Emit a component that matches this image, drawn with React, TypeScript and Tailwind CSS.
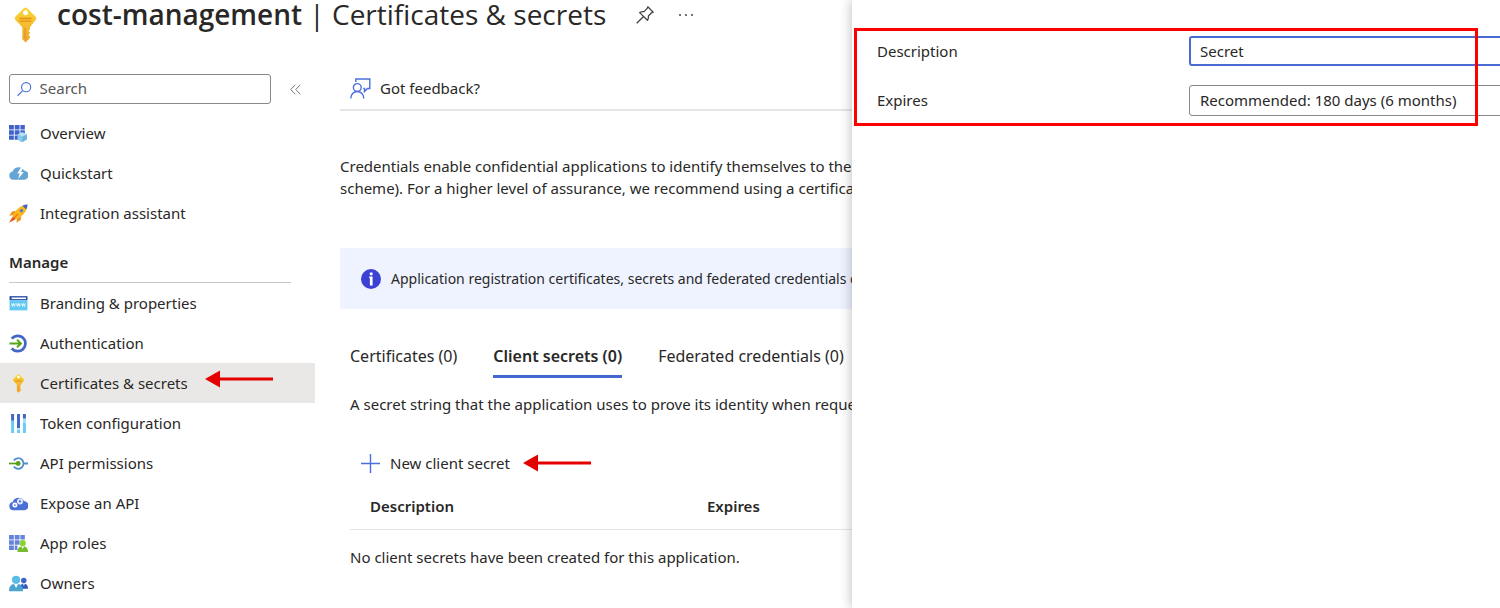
import React from "react"

interface NavItem {
  label: string
  icon: React.ReactNode
  active?: boolean
}

const svgProps = {
  viewBox: "0 0 18 18",
  fill: "none",
  "aria-hidden": true,
  className: "w-[19px] h-[19px] shrink-0",
}

function KeyIcon({ className }: { className: string }) {
  return (
    <svg viewBox="0 0 22 36" fill="none" aria-hidden className={className}>
      <defs>
        <linearGradient id="key-fill" x1="11" y1="0" x2="11" y2="36" gradientUnits="userSpaceOnUse">
          <stop stopColor="#f9d835" />
          <stop offset="1" stopColor="#efa32a" />
        </linearGradient>
      </defs>
      <path
        d="M9.3 1.3 1.3 9.2a3 3 0 0 0 0 4.2l5.9 6c.4.4.6.9.6 1.5v11.2l3.2 3.4 4.4-4.4v-1.6l-1.4-1.4 1.4-1.5v-1.2L14 23.9l1.4-1.5v-1.5c0-.6.2-1.1.6-1.5l4.7-5.900a3 3 0 0 0 0-4.200l-8-8a2.500 2.500 0 0 0-3.400 0Z"
        fill="url(#key-fill)"
      />
      <circle cx="11" cy="5.7" r="2.5" fill="#fff" />
      <path d="M5.5 11.5h11M5.5 14.2h11" stroke="#e58f1c" strokeWidth="1.3" strokeLinecap="round" />
      <path d="M10.5 21v10.5" stroke="#e0952a" strokeWidth="1.2" />
    </svg>
  )
}

function OverviewIcon() {
  return (
    <svg {...svgProps}>
      <path
        d="M0 1h4.600v4.200H0zM5.400 1H10v4.200H5.400zM10.800 1h4.200v4.200h-4.200zM0 6h4.600v4.200H0zM5.400 6H10v4.200H5.400zM10.800 6h4.200v4.200h-4.200zM0 11h4.600v4H0zM5.400 11H10v4H5.400z"
        fill="#3f63c9"
      />
      <path d="m12.600 7.800 4.400 2v5l-4.400 2.400-4.400-2.400v-5z" fill="#6db3df" />
      <path d="m12.600 7.800 4.400 2-4.400 2.200-4.400-2.200z" fill="#b9e0f5" />
      <path d="M12.600 12v5.200L8.200 14.800v-5z" fill="#8cc8ea" />
    </svg>
  )
}

function QuickstartIcon() {
  return (
    <svg {...svgProps}>
      <path
        d="M4 15a4 4 0 0 1-.5-7.900A5.800 5.800 0 0 1 14.200 6.200 4.400 4.400 0 0 1 14 15z"
        fill="#64a5d4"
      />
      <path d="M11.800 2.500 7.800 9h2.400l-1.600 5.200L14 7.600h-2.600l2.200-4.600z" fill="#fff" />
    </svg>
  )
}

function RocketIcon() {
  return (
    <svg {...svgProps}>
      <path d="M6.500 6.500 2.800 7 .3 11.200l4.500-.8zM11.600 11.400l-.5 3.800L7 17.800l.7-4.500z" fill="#ee9420" />
      <path d="M3.800 11.500 0 17.800l6.600-3.500z" fill="#e5541d" />
      <path d="M17.500.5c-4.600.3-8.400 2.700-11 6L3.200 11.500l3.300 3.300 5.100-3.100c3.400-2.600 5.700-6.500 5.900-11.200z" fill="#fbb81c" />
      <path d="M17.500.5c-1.700 0-3.300.5-4.800 1.200l3.700 3.600c.7-1.500 1.100-3.100 1.100-4.800z" fill="#3f63c9" />
      <circle cx="11.8" cy="6.3" r="1.6" fill="#5a78cf" />
      <path d="m4.500 13.500 4-4" stroke="#e8771c" strokeWidth="1.2" />
    </svg>
  )
}

function BrandingIcon() {
  return (
    <svg {...svgProps}>
      <path d="M.5 2h17v4H.5z" fill="#2c4fa5" />
      <path d="M2.500 3.300h13.600v1.500H2.500z" fill="#fff" />
      <path d="M.5 6h17v9.500H.5z" fill="#63c9f3" />
      <path
        d="m2.500 9 .8 2.700L4.200 9l.9 2.700.8-2.700M7.200 9l.8 2.700.9-2.700.9 2.700.8-2.700M12 9l.8 2.700.9-2.700.9 2.700.8-2.700"
        stroke="#fff"
        strokeWidth=".8"
      />
    </svg>
  )
}

function AuthenticationIcon() {
  return (
    <svg {...svgProps}>
      <path d="M2.600 4.400a7.300 7.300 0 1 1 0 9.200" stroke="#4166c8" strokeWidth="2.6" />
      <path d="M.5 9h10.600M7.600 5.400 11.300 9l-3.700 3.600" stroke="#58a618" strokeWidth="1.9" />
    </svg>
  )
}

function TokenIcon() {
  return (
    <svg {...svgProps}>
      <path d="M3.400 0v6.500M9 0v13.500M14.600 0v4.500" stroke="#4166c8" strokeWidth="2.8" />
      <path d="M3.400 6.500V18M9 14.700V18M14.600 8.500V18" stroke="#66cdf2" strokeWidth="2.8" />
      <path d="M14.600 4.500v4" stroke="#a5e1f8" strokeWidth="2.8" />
    </svg>
  )
}

function PermissionsIcon() {
  return (
    <svg {...svgProps}>
      <path d="M4.600 6.200a5 5 0 1 1 0 5.600M14 9h4" stroke="#508fcb" strokeWidth="1.7" />
      <path d="M0 9h8" stroke="#57a01c" strokeWidth="1.6" />
      <circle cx="8.7" cy="9" r="2.3" fill="#57a01c" />
    </svg>
  )
}

function ExposeIcon() {
  return (
    <svg {...svgProps}>
      <path d="M4 15.500a4 4 0 0 1-.5-7.900A5.800 5.800 0 0 1 14.200 6.700a4.400 4.400 0 0 1-.2 8.800z" fill="#4a70d6" />
      <circle cx="10.4" cy="7" r="2" stroke="#dfe8ff" strokeWidth="1.8" />
      <circle cx="5.6" cy="10.5" r="1.6" stroke="#fff" strokeWidth="1.6" />
    </svg>
  )
}

function RolesIcon() {
  return (
    <svg {...svgProps}>
      <path
        d="M0 1h4.600v4.200H0zM5.400 1H10v4.200H5.400zM10.800 1h4.200v4.200h-4.200zM0 6h4.600v4.200H0zM5.400 6H10v4.200H5.400zM0 11h4.600v4.200H0zM5.400 11H8v4.200H5.400z"
        fill="#6684dc"
      />
      <path d="M8 17c0-3.300 1.300-5.500 5-5.500s5 2.200 5 5.500z" fill="#76bc2d" />
      <path d="m11.600 11.600 1.400 2.600 1.400-2.600z" fill="#fff" />
      <circle cx="13" cy="8.7" r="2.9" fill="#86d633" />
    </svg>
  )
}

function OwnersIcon() {
  return (
    <svg {...svgProps}>
      <path d="M10.500 14c0-3 .8-4.800 3.600-4.800S18 11 18 14z" fill="#3559bd" />
      <circle cx="14" cy="6.2" r="2.6" fill="#3f63c9" />
      <path d="m13.200 9.300.9 2 .9-2z" fill="#fff" />
      <path d="M0 16.300c0-4.400 1.900-7 6.700-7s6.600 2.600 6.600 7z" fill="#4ba3d1" />
      <path d="m4.800 9.400 1.900 3.800 1.900-3.800z" fill="#fff" />
      <circle cx="6.7" cy="5.5" r="3.9" fill="#5bbde6" />
    </svg>
  )
}

function ArrowLeft({ className = "" }: { className?: string }) {
  return (
    <svg viewBox="0 0 68 18" aria-hidden className={`w-[68px] h-[18px] shrink-0 ${className}`}>
      <path d="M0 9 15 .5v17z" fill="#e50000" />
      <path d="M14 9h54" stroke="#e50000" strokeWidth="3" />
    </svg>
  )
}

const topItems: NavItem[] = [
  { label: "Overview", icon: <OverviewIcon /> },
  { label: "Quickstart", icon: <QuickstartIcon /> },
  { label: "Integration assistant", icon: <RocketIcon /> },
]

const manageItems: NavItem[] = [
  { label: "Branding & properties", icon: <BrandingIcon /> },
  { label: "Authentication", icon: <AuthenticationIcon /> },
  { label: "Certificates & secrets", icon: <KeyIcon className="w-[19px] h-[19px] shrink-0" />, active: true },
  { label: "Token configuration", icon: <TokenIcon /> },
  { label: "API permissions", icon: <PermissionsIcon /> },
  { label: "Expose an API", icon: <ExposeIcon /> },
  { label: "App roles", icon: <RolesIcon /> },
  { label: "Owners", icon: <OwnersIcon /> },
]

function NavList({ items }: { items: NavItem[] }) {
  return (
    <ul>
      {items.map((item) => (
        <li key={item.label} className="relative">
          <a
            href="#"
            aria-current={item.active ? "page" : undefined}
            className={`flex h-10 items-center gap-3 pl-[9px] ${item.active ? "bg-[#e9e8e6]" : "hover:bg-gray-100"}`}
          >
            {item.icon}
            {item.label}
          </a>
          {item.active && <ArrowLeft className="absolute left-[205px] top-[7px]" />}
        </li>
      ))}
    </ul>
  )
}

function Sidebar() {
  return (
    <nav className="w-[315px] shrink-0">
      <div className="flex items-center pl-[9px] pb-[9px]">
        <label className="flex h-[30px] w-[262px] items-center gap-2 rounded-[3px] border border-[#8a8886] pl-[7px]">
          <svg viewBox="0 0 16 16" fill="none" stroke="#4a6fdc" strokeWidth="1.3" aria-hidden className="w-4 h-4">
            <circle cx="10" cy="6" r="5" />
            <path d="M6.300 9.700.6 15.400" />
          </svg>
          <input
            type="text"
            aria-label="Search"
            placeholder="Search"
            className="w-full bg-transparent pb-[2px] outline-none placeholder:text-[#555]"
          />
        </label>
        <button type="button" aria-label="Collapse menu" className="ml-[19px]">
          <svg viewBox="0 0 11 11" fill="none" stroke="#777" aria-hidden className="w-[11px] h-[11px]">
            <path d="M5.300.8.7 5.500l4.600 4.700M10.300.8 5.700 5.500l4.600 4.700" />
          </svg>
        </button>
      </div>
      <NavList items={topItems} />
      <h2 className="ml-[9px] mr-6 flex h-[50px] items-center border-b border-[#c8c8c8] pt-[9px] font-semibold">Manage</h2>
      <NavList items={manageItems} />
    </nav>
  )
}

function CertificatesContent() {
  return (
    <main className="ml-[25px] min-w-0 flex-1 whitespace-nowrap">
      <div className="flex h-[37px] items-start border-b-2 border-[#e6e6e6]">
        <button type="button" className="ml-[10px] flex h-7 items-center gap-[9px]">
          <svg viewBox="0 0 21 21" fill="none" stroke="#4a6fdc" strokeWidth="1.4" aria-hidden className="w-[21px] h-[21px]">
            <path d="M5.800 4V1h14v9.500h-2.300l-3 3v-3h-1.200" />
            <circle cx="7.3" cy="9.5" r="3.9" />
            <path d="M.8 20.500c0-4 2.700-7 6.500-7s6.500 3 6.500 7" />
          </svg>
          Got feedback?
        </button>
      </div>
      <p className="mt-[44px] leading-[22px]">
        Credentials enable confidential applications to identify themselves to the authentication service
        <br />
        scheme). For a higher level of assurance, we recommend using a certificate
      </p>
      <div className="mt-[49px] flex h-[61px] items-center gap-[10px] rounded-[2px] bg-[#eff3ff] pl-[21px] text-sm">
        <svg viewBox="0 0 20 20" aria-hidden className="w-5 h-5 shrink-0">
          <circle cx="10" cy="10" r="10" fill="#3b41d2" />
          <circle cx="10.2" cy="4.8" r="1.6" fill="#fff" />
          <path d="M8.300 7.500h3.300v9H8.900V9.200h-.6z" fill="#fff" />
        </svg>
        Application registration certificates, secrets and federated credentials can be found in the tabs below.
      </div>
      <div className="pl-[10px]">
        <div role="tablist" className="mt-[28px] flex h-[41px] items-stretch gap-9 text-base">
          <button type="button" role="tab" aria-selected="false" className="border-b-3 border-transparent">
            Certificates (0)
          </button>
          <button type="button" role="tab" aria-selected="true" className="border-b-3 border-[#4468d0] font-semibold">
            Client secrets (0)
          </button>
          <button type="button" role="tab" aria-selected="false" className="border-b-3 border-transparent">
            Federated credentials (0)
          </button>
        </div>
        <p className="mt-[15px] leading-[22px]">
          A secret string that the application uses to prove its identity when requesting a token.
        </p>
        <div className="mt-[37px] flex h-[22px] items-center gap-[13px] pl-[10px]">
          <button type="button" className="flex items-center gap-[9px]">
            <svg viewBox="0 0 21 21" stroke="#4a6fdc" strokeWidth="1.4" aria-hidden className="w-[21px] h-[21px]">
              <path d="M10.500 1v19M1 10.500h19" />
            </svg>
            New client secret
          </button>
          <ArrowLeft />
        </div>
        <table className="mt-[10px] w-full table-fixed text-left">
          <thead>
            <tr className="h-[45px] border-b border-[#e6e6e6]">
              <th className="w-[337px] pl-5 font-semibold">Description</th>
              <th className="pl-5 font-semibold">Expires</th>
            </tr>
          </thead>
          <tbody>
            <tr className="h-[56px]">
              <td colSpan={2}>No client secrets have been created for this application.</td>
            </tr>
          </tbody>
        </table>
      </div>
    </main>
  )
}

function AddSecretPanel() {
  return (
    <aside className="relative z-10 w-[648px] shrink-0 bg-white shadow-[0_0_12px_rgba(0,0,0,0.28)]">
      <form className="flex flex-col gap-[19px] overflow-hidden pl-[25px] pt-[36px]">
        <div className="flex items-center">
          <label htmlFor="description" className="w-[312px] shrink-0">
            Description
          </label>
          <input
            id="description"
            type="text"
            defaultValue="Secret"
            className="h-[30px] w-[340px] shrink-0 rounded-[3px] border-2 border-[#4a6ad4] px-[9px] outline-none"
          />
        </div>
        <div className="flex items-center">
          <label htmlFor="expires" className="w-[312px] shrink-0">
            Expires
          </label>
          <select
            id="expires"
            className="h-[31px] w-[340px] shrink-0 appearance-none rounded-[3px] border border-[#8a8886] bg-white px-[10px] outline-none"
          >
            <option>Recommended: 180 days (6 months)</option>
          </select>
        </div>
      </form>
      <div className="pointer-events-none absolute left-[2px] right-[22px] top-[28px] h-[98px] border-3 border-[#ff0000]" />
    </aside>
  )
}

export default function App() {
  return (
    <div className="flex h-screen overflow-hidden bg-white font-['Noto_Sans','Open_Sans',sans-serif] text-[15px] text-[#292827]">
      <div className="min-w-0 flex-1 overflow-hidden">
        <header className="flex h-[74px] items-start pl-[14px]">
          <KeyIcon className="mt-[7px] w-[23px] h-[36px] shrink-0" />
          <h1 className="ml-5 whitespace-nowrap font-['Open_Sans','Noto_Sans',sans-serif] text-[28px] leading-7">
            <span className="font-semibold">cost-management</span> | Certificates &amp; secrets
          </h1>
          <button type="button" aria-label="Pin" className="ml-[30px] mt-[6px]">
            <svg viewBox="0 0 18 18" fill="none" stroke="#444" strokeWidth="1.3" strokeLinejoin="round" aria-hidden className="w-[18px] h-[18px]">
              <path d="m11.800.8 5.400 5.400-1.600.6-3.200 3.200c.2 1.700-.1 3.100-1 4.300L3.700 6.600c1.200-.9 2.600-1.200 4.300-1L11.200 2.400zM7.300 10.700.7 17.300" />
            </svg>
          </button>
          <button type="button" aria-label="More" className="ml-[24px] mt-[6px]">
            <svg viewBox="0 0 16 18" fill="#444" aria-hidden className="w-4 h-[18px]">
              <circle cx="2" cy="9" r="1" />
              <circle cx="8" cy="9" r="1" />
              <circle cx="14" cy="9" r="1" />
            </svg>
          </button>
        </header>
        <div className="flex">
          <Sidebar />
          <CertificatesContent />
        </div>
      </div>
      <AddSecretPanel />
    </div>
  )
}
